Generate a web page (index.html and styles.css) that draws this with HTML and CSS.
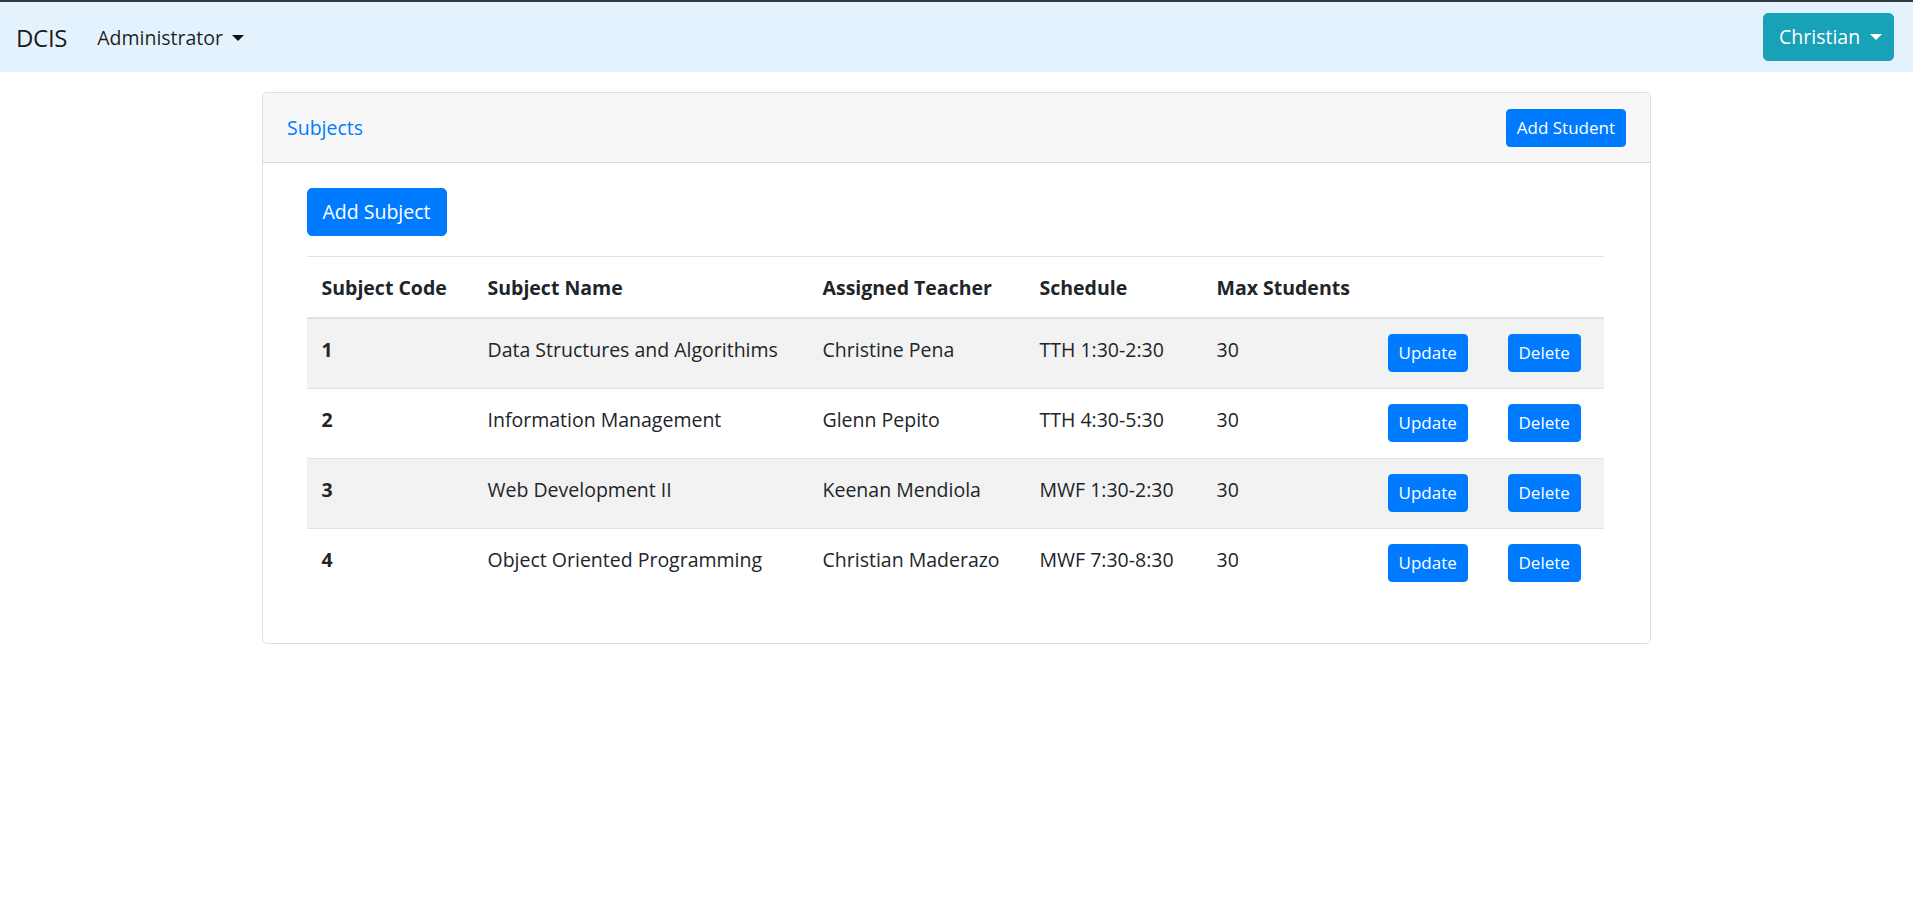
FILE: index.html
```html
<!DOCTYPE html>
<html lang="en">
<head>
<meta charset="utf-8">
<title>DCIS - Subjects</title>
<link rel="stylesheet" href="styles.css">
</head>
<body>
<nav class="navbar">
  <div class="nav-left">
    <a class="brand" href="#">DCIS</a>
    <a class="nav-link" href="#">Administrator<span class="caret"></span></a>
  </div>
  <button class="btn btn-info">Christian<span class="caret caret-white"></span></button>
</nav>

<main class="container">
  <section class="card">
    <header class="card-header">
      <a class="header-link" href="#">Subjects</a>
      <button class="btn btn-primary btn-sm">Add Student</button>
    </header>
    <div class="card-body">
      <div class="inner">
        <button class="btn btn-primary add-subject">Add Subject</button>
        <table class="table">
          <thead>
            <tr>
              <th class="c1">Subject Code</th>
              <th class="c2">Subject Name</th>
              <th class="c3">Assigned Teacher</th>
              <th class="c4">Schedule</th>
              <th class="c5">Max Students</th>
              <th class="c6"></th>
              <th class="c7"></th>
            </tr>
          </thead>
          <tbody>
            <tr>
              <th>1</th>
              <td>Data Structures and Algorithims</td>
              <td>Christine Pena</td>
              <td>TTH 1:30-2:30</td>
              <td>30</td>
              <td><button class="btn btn-primary btn-sm">Update</button></td>
              <td><button class="btn btn-primary btn-sm">Delete</button></td>
            </tr>
            <tr>
              <th>2</th>
              <td>Information Management</td>
              <td>Glenn Pepito</td>
              <td>TTH 4:30-5:30</td>
              <td>30</td>
              <td><button class="btn btn-primary btn-sm">Update</button></td>
              <td><button class="btn btn-primary btn-sm">Delete</button></td>
            </tr>
            <tr>
              <th>3</th>
              <td>Web Development II</td>
              <td>Keenan Mendiola</td>
              <td>MWF 1:30-2:30</td>
              <td>30</td>
              <td><button class="btn btn-primary btn-sm">Update</button></td>
              <td><button class="btn btn-primary btn-sm">Delete</button></td>
            </tr>
            <tr>
              <th>4</th>
              <td>Object Oriented Programming</td>
              <td>Christian Maderazo</td>
              <td>MWF 7:30-8:30</td>
              <td>30</td>
              <td><button class="btn btn-primary btn-sm">Update</button></td>
              <td><button class="btn btn-primary btn-sm">Delete</button></td>
            </tr>
          </tbody>
        </table>
      </div>
    </div>
  </section>
</main>
</body>
</html>
```

FILE: styles.css
```css
* { box-sizing: border-box; }

html, body {
  margin: 0;
  padding: 0;
}

body {
  font-family: "Open Sans", "Noto Sans", "Liberation Sans", sans-serif;
  font-size: 19.5px;
  line-height: 30px;
  color: #212529;
  background: #fff;
}

a { text-decoration: none; }

.navbar {
  display: flex;
  align-items: center;
  justify-content: space-between;
  border-top: 2px solid #2f3a40;
  background: #e3f2fd;
  padding: 11px 19px 11px 16px;
  height: 72px;
}

.nav-left {
  display: flex;
  align-items: center;
  padding-top: 2px;
}

.brand {
  font-size: 24px;
  line-height: 36px;
  color: rgba(0, 0, 0, 0.9);
  margin-right: 20px;
  letter-spacing: -0.3px;
}

.nav-link {
  color: rgba(0, 0, 0, 0.88);
  padding: 0 10px;
}

.caret {
  display: inline-block;
  margin-left: 9px;
  vertical-align: 4px;
  border-top: 6px solid #111;
  border-left: 6px solid transparent;
  border-right: 6px solid transparent;
}

.caret-white { border-top-color: #fff; margin-left: 10px; vertical-align: 0; }

.btn {
  font-family: inherit;
  font-size: 19.5px;
  line-height: 30px;
  border: 1px solid transparent;
  border-radius: 5px;
  padding: 7.5px 15px;
  color: #fff;
  cursor: pointer;
  white-space: nowrap;
}

.btn-info {
  display: inline-flex;
  align-items: center;
  background: #17a2b8;
  border-color: #17a2b8;
  height: 48px;
  width: 131px;
  padding: 0 12px 0 15px;
}

.btn-primary {
  background: #007bff;
  border-color: #007bff;
}

.btn-sm {
  font-size: 17px;
  line-height: 26px;
  padding: 5px 10px;
  border-radius: 4px;
  height: 38px;
}

.container {
  width: 1427px;
  margin: 20px auto 0;
  padding: 0 19px;
}

.card {
  border: 1px solid rgba(0, 0, 0, 0.125);
  border-radius: 5px;
  background: #fff;
}

.card-header {
  display: flex;
  align-items: center;
  justify-content: space-between;
  background: #f7f7f7;
  border-bottom: 1px solid rgba(0, 0, 0, 0.125);
  border-radius: 5px 5px 0 0;
  padding: 15px 24px 15px 24px;
  height: 70px;
}

.header-link {
  color: #007bff;
}

.card-body {
  padding: 25px 25px 25px;
}

.inner {
  padding: 0 18.5px;
}

.add-subject {
  display: block;
  height: 48px;
  width: 140px;
  padding: 0 14px;
  margin-bottom: 20px;
}

.table {
  width: 1297px;
  border-collapse: collapse;
  table-layout: fixed;
  margin-bottom: 20px;
}

.table th,
.table td {
  padding: 15px;
  text-align: left;
  vertical-align: top;
  border-top: 1px solid #dee2e6;
}

.table th { font-weight: 700; }

.table thead th {
  vertical-align: bottom;
  border-bottom: 2px solid #dee2e6;
  padding-top: 16px;
  padding-bottom: 14px;
}

.table tbody tr { height: 70px; }

.table tbody td,
.table tbody th {
  padding: 16px 15px 14px;
}

.table tbody td:nth-child(6),
.table tbody td:nth-child(7) {
  padding-top: 15px;
  padding-bottom: 15px;
}

.table tbody tr:nth-of-type(odd) {
  background: rgba(0, 0, 0, 0.05);
}

.c1 { width: 166px; }
.c2 { width: 335px; }
.c3 { width: 217px; }
.c4 { width: 177px; }
.c5 { width: 171px; }
.c6 { width: 120px; }
.c7 { width: 111px; }
```
